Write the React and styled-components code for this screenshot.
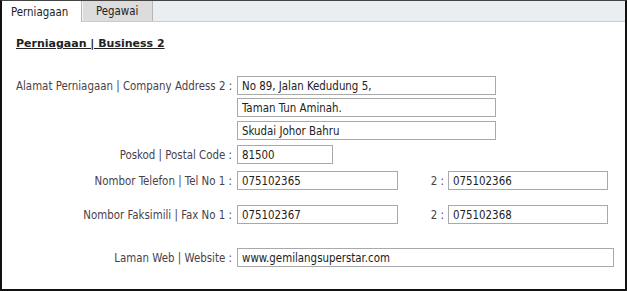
import React from "react";
import styled, { createGlobalStyle } from "styled-components";

const Global = createGlobalStyle`
  html, body {
    margin: 0;
    padding: 0;
    background: #fff;
  }
  body {
    font-family: "DejaVu Sans Condensed", "DejaVu Sans", sans-serif;
    font-size: 11.4px;
    color: #333;
  }
`;

const Frame = styled.div`
  width: 627px;
  height: 291px;
  box-sizing: border-box;
  border: 1px solid #111;
  border-top-color: #444;
  border-width: 1px 2px 2px 2px;
  display: flex;
  flex-direction: column;
  background: #fff;
  overflow: hidden;
`;

const TabBar = styled.div`
  display: flex;
  height: 20px;
  background: #eaeef0;
  border-bottom: 1px solid #c9cdd0;
  box-sizing: content-box;
`;

const Tab = styled.div`
  height: ${(p) => (p.$active ? "21px" : "20px")};
  width: ${(p) => (p.$active ? "80px" : "71px")};
  box-sizing: border-box;
  padding: 0 ${(p) => (p.$active ? "9px" : "13px")};
  display: flex;
  align-items: center;
  background: ${(p) => (p.$active ? "#fff" : "#dcdcdc")};
  border-right: 1px solid #b7b7b7;
  border-left: ${(p) => (p.$active ? "none" : "1px solid #f4f4f4")};
  color: #222;
`;

const Body = styled.div`
  padding: 15px 0 0 14px;
  display: flex;
  flex-direction: column;
`;

const Heading = styled.h2`
  margin: 0 0 26px 0;
  font-family: "DejaVu Sans", sans-serif;
  font-size: 11px;
  font-weight: bold;
  text-decoration: underline;
  color: #222;
`;

const Row = styled.div`
  display: flex;
  align-items: center;
  margin-top: ${(p) => p.$gap || 0}px;
`;

const Label = styled.label`
  width: 216px;
  text-align: right;
  padding-right: 5px;
  white-space: nowrap;
  color: #4a3f4a;
`;

const Sep = styled.span`
  width: 32px;
  text-align: right;
  padding-right: 4px;
  margin-left: ${(p) => p.$left}px;
  color: #4a3f4a;
`;

const Field = styled.input`
  width: ${(p) => p.$w}px;
  height: 19px;
  box-sizing: border-box;
  border: 1px solid #a9a9a9;
  padding: 0 4px;
  font-family: inherit;
  font-size: 11.4px;
  color: #222;
  background: #fff;
  outline: none;
`;

export default function App() {
  return (
    <>
      <Global />
      <Frame>
        <TabBar>
          <Tab $active>Perniagaan</Tab>
          <Tab>Pegawai</Tab>
        </TabBar>
        <Body>
          <Heading>Perniagaan | Business 2</Heading>
          <Row>
            <Label>Alamat Perniagaan | Company Address 2 :</Label>
            <Field $w={259} defaultValue="No 89, Jalan Kedudung 5," />
          </Row>
          <Row $gap={3}>
            <Label />
            <Field $w={259} defaultValue="Taman Tun Aminah." />
          </Row>
          <Row $gap={4}>
            <Label />
            <Field $w={259} defaultValue="Skudai Johor Bahru" />
          </Row>
          <Row $gap={5}>
            <Label>Poskod | Postal Code :</Label>
            <Field $w={96} defaultValue="81500" />
          </Row>
          <Row $gap={7}>
            <Label>Nombor Telefon | Tel No 1 :</Label>
            <Field $w={161} defaultValue="075102365" />
            <Sep $left={14}>2 :</Sep>
            <Field $w={160} defaultValue="075102366" />
          </Row>
          <Row $gap={15}>
            <Label>Nombor Faksimili | Fax No 1 :</Label>
            <Field $w={161} defaultValue="075102367" />
            <Sep $left={14}>2 :</Sep>
            <Field $w={160} defaultValue="075102368" />
          </Row>
          <Row $gap={24}>
            <Label>Laman Web | Website :</Label>
            <Field $w={377} defaultValue="www.gemilangsuperstar.com" />
          </Row>
        </Body>
      </Frame>
    </>
  );
}
